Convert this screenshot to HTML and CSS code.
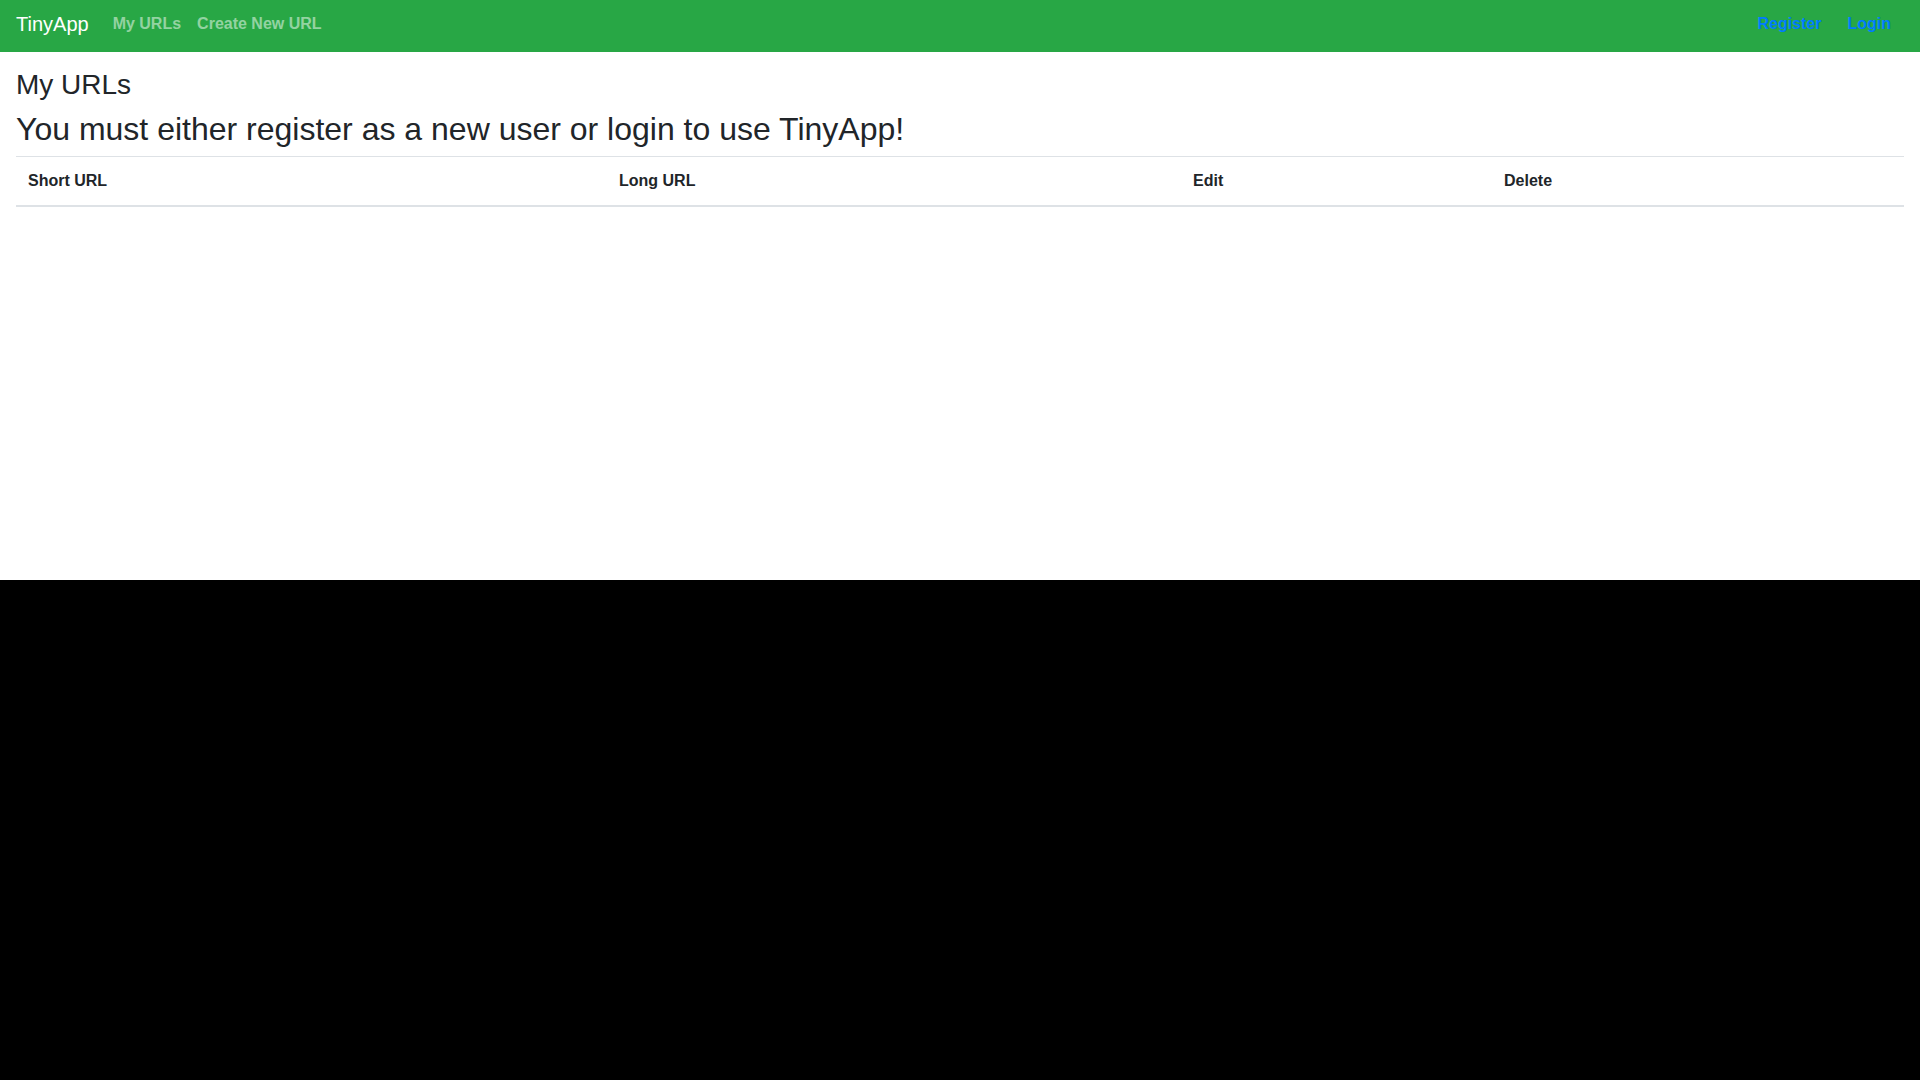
FILE: index.html
```html
<!DOCTYPE html>
<html lang="en">
<head>
<meta charset="utf-8">
<title>TinyApp</title>
<link rel="stylesheet" href="styles.css">
</head>
<body>
<nav class="navbar">
  <a class="brand" href="#">TinyApp</a>
  <div class="nav-left">
    <a class="nav-link" href="#">My URLs</a>
    <a class="nav-link" href="#">Create New URL</a>
  </div>
  <div class="nav-right">
    <a class="auth-link" href="#">Register</a>
    <a class="auth-link" href="#">Login</a>
  </div>
</nav>
<main class="container">
  <h3 class="title">My URLs</h3>
  <h2 class="notice">You must either register as a new user or login to use TinyApp!</h2>
  <table class="table">
    <thead>
      <tr>
        <th class="col-short">Short URL</th>
        <th class="col-long">Long URL</th>
        <th class="col-edit">Edit</th>
        <th class="col-delete">Delete</th>
      </tr>
    </thead>
    <tbody></tbody>
  </table>
</main>
</body>
</html>
```
FILE: styles.css
```css
html {
  background: #000;
}
body {
  margin: 0;
  height: 580px;
  background: #fff;
  color: #212529;
  font-family: "Liberation Sans", Arial, sans-serif;
  font-size: 16px;
  line-height: 1.5;
}
a {
  text-decoration: none;
}
.navbar {
  display: flex;
  align-items: center;
  height: 52px;
  padding: 0 16px;
  box-sizing: border-box;
  background: #28a745;
}
.brand {
  color: #fff;
  font-size: 20px;
  line-height: 30px;
  margin-right: 16px;
  margin-top: -4px;
}
.nav-left {
  display: flex;
  flex: 1;
  margin-top: -4px;
}
.nav-link {
  color: rgba(255, 255, 255, 0.5);
  font-weight: bold;
  padding: 0 8px;
  line-height: 24px;
}
.nav-right {
  display: flex;
  gap: 26px;
  padding-right: 13px;
  margin-top: -4px;
}
.auth-link {
  color: #007bff;
  font-weight: bold;
  line-height: 24px;
}
.container {
  padding: 16px 16px 0;
}
.title {
  margin: 0 0 8px;
  font-size: 28px;
  font-weight: 500;
  line-height: 1.2;
}
.notice {
  margin: 0 0 8px;
  font-size: 32px;
  font-weight: 500;
  line-height: 1.2;
}
.table {
  width: 100%;
  border-collapse: collapse;
  table-layout: fixed;
}
.table th {
  box-sizing: border-box;
  text-align: left;
  font-weight: bold;
  padding: 12px;
  line-height: 24px;
  border-top: 1px solid #dee2e6;
  border-bottom: 2px solid #dee2e6;
}
.col-short { width: 591px; }
.col-long { width: 574px; }
.col-edit { width: 311px; }
.col-delete { width: auto; }
```
